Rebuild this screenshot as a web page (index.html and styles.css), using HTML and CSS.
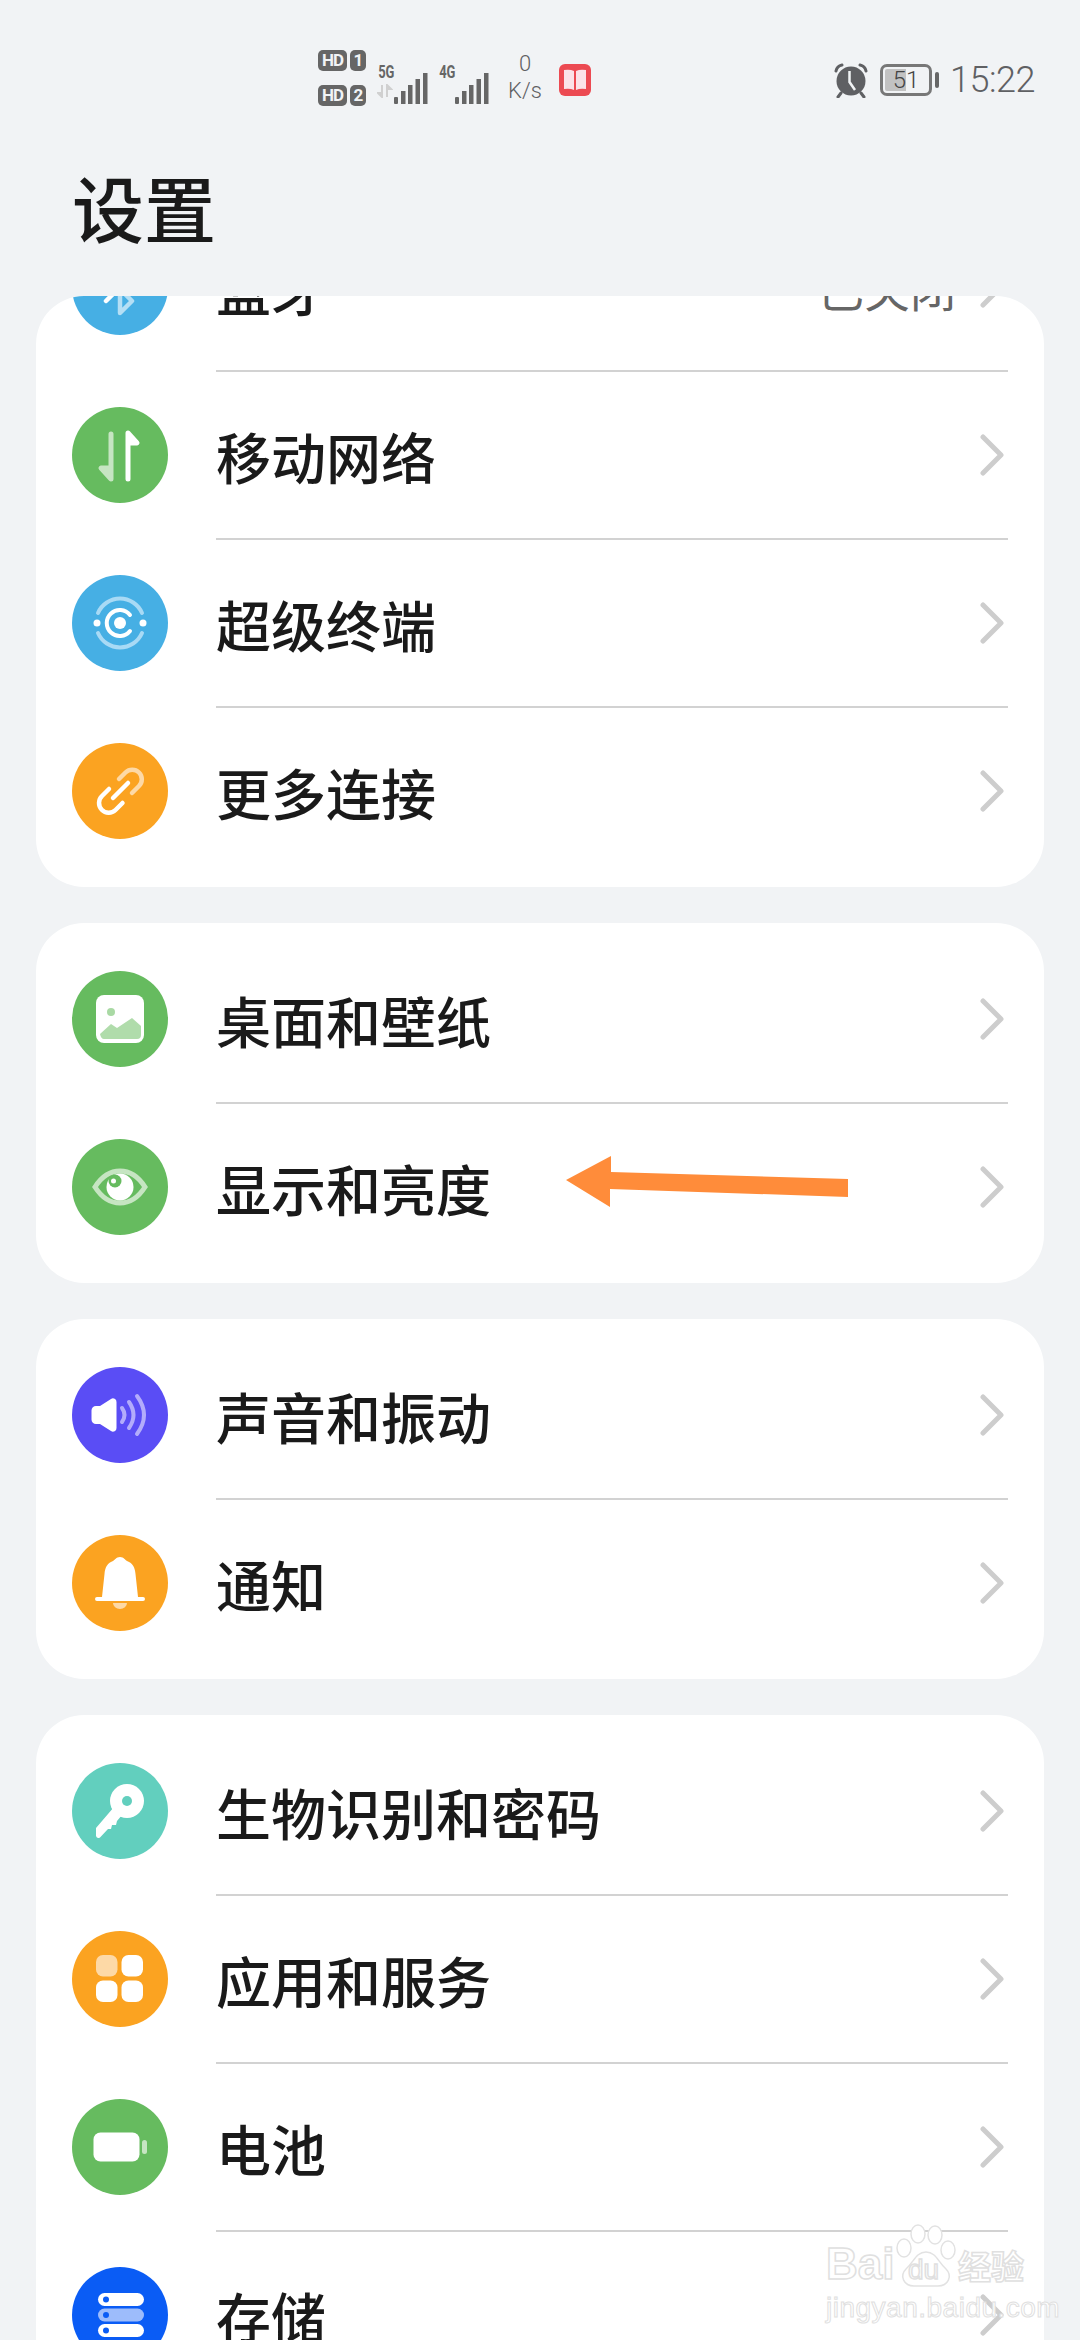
FILE: index.html
```html
<!DOCTYPE html>
<html lang="zh-CN">
<head>
    <meta charset="UTF-8">
    <meta name="viewport" content="width=device-width, initial-scale=1.0">
    <title>设置</title>
    <link rel="stylesheet" href="styles.css">
</head>
<body>
    <svg class="defs" width="0" height="0">
        <symbol id="chev" viewBox="0 0 24 42">
            <path d="M3 3 L21 21 L3 39" fill="none" stroke="#cdcdcd" stroke-width="5" stroke-linecap="round" stroke-linejoin="round"/>
        </symbol>
        <symbol id="bars" viewBox="0 0 34 32">
            <rect x="0" y="24" width="4" height="7" rx="1" fill="#666"/>
            <rect x="7" y="18" width="4.500" height="13" fill="#666"/>
            <rect x="14" y="12" width="4.500" height="19" fill="#666"/>
            <rect x="21.500" y="6" width="4.500" height="25" fill="#666"/>
            <rect x="29" y="0" width="4.500" height="31" fill="#666"/>
        </symbol>
    </svg>

    <header class="status-bar">
        <div class="sim-badges">
            <div class="sim-line"><span class="badge">HD</span><span class="badge badge-num">1</span></div>
            <div class="sim-line"><span class="badge">HD</span><span class="badge badge-num">2</span></div>
        </div>
        <div class="signal">
            <span class="net-label">5G</span>
            <svg class="data-arrows" width="16" height="14" viewBox="0 0 16 14">
                <path d="M5 1 V13 L1 9 H4 M10 13 V1 L14 5 H11" fill="#d0d0d0" stroke="#d0d0d0" stroke-width="2"/>
            </svg>
            <svg class="bars" width="34" height="32"><use href="#bars"/></svg>
        </div>
        <div class="signal">
            <span class="net-label">4G</span>
            <svg class="bars" width="34" height="32"><use href="#bars"/></svg>
        </div>
        <div class="net-speed"><span>0</span><span>K/s</span></div>
        <svg class="book-icon" width="32" height="32" viewBox="0 0 32 32">
            <rect width="32" height="32" rx="6" fill="#ec4a52"/>
            <path d="M5 6 Q11 5 15 7 V26 Q11 24 5 25 Z" fill="#fbe3e8"/>
            <path d="M27 6 Q21 5 17 7 V26 Q21 24 27 25 Z" fill="#fbe3e8"/>
        </svg>
        <div class="status-right">
            <svg width="36" height="36" viewBox="0 0 36 36">
                <path d="M3 9 Q4 4 9 3 M33 9 Q32 4 27 3 M8 31 L5 35 M28 31 L31 35" fill="none" stroke="#5f6063" stroke-width="3" stroke-linecap="round"/>
                <circle cx="18" cy="19" r="14.500" fill="#5f6063"/>
                <path d="M16.500 9 V20 L22 28" fill="none" stroke="#f1f3f5" stroke-width="2.500"/>
            </svg>
            <div class="battery">
                <div class="battery-body"><span>51</span></div>
                <div class="battery-nub"></div>
            </div>
            <span class="clock">15:22</span>
        </div>
    </header>

    <h1 class="page-title">设置</h1>

    <main class="scroller">
        <section class="card card-scrolled">
            <div class="row">
                <svg class="icon" viewBox="0 0 96 96">
                    <circle cx="48" cy="48" r="48" fill="#46afe4"/>
                    <path d="M48 48 V74 L60 62 L48 50" fill="none" stroke="#b4dff5" stroke-width="4.500" stroke-linejoin="round"/>
                    <path d="M34 62 L48 48" fill="none" stroke="#fff" stroke-width="4.500" stroke-linecap="round"/>
                </svg>
                <span class="label">蓝牙</span>
                <span class="value">已关闭</span>
                <svg class="chevron"><use href="#chev"/></svg>
            </div>
            <div class="row">
                <svg class="icon" viewBox="0 0 96 96">
                    <circle cx="48" cy="48" r="48" fill="#66bb5f"/>
                    <path d="M39 27 V72 L29 61 H37" fill="#c6e5c2" stroke="#c6e5c2" stroke-width="5" stroke-linecap="round" stroke-linejoin="round"/>
                    <path d="M56 72 V26 L65 36 H58" fill="#fff" stroke="#fff" stroke-width="5" stroke-linecap="round" stroke-linejoin="round"/>
                </svg>
                <span class="label">移动网络</span>
                <svg class="chevron"><use href="#chev"/></svg>
            </div>
            <div class="row">
                <svg class="icon" viewBox="0 0 96 96">
                    <circle cx="48" cy="48" r="48" fill="#46afe4"/>
                    <path d="M26 38 A24 24 0 0 1 70 38 M70 58 A24 24 0 0 1 26 58" fill="none" stroke="#a8daf5" stroke-width="4" stroke-linecap="round"/>
                    <path d="M58 40 A13 13 0 1 0 58 56" fill="none" stroke="#fff" stroke-width="4" stroke-linecap="round"/>
                    <circle cx="48" cy="48" r="6" fill="#fff"/>
                    <circle cx="25" cy="48" r="3.500" fill="#fff"/>
                    <circle cx="71" cy="48" r="3.500" fill="#fff"/>
                </svg>
                <span class="label">超级终端</span>
                <svg class="chevron"><use href="#chev"/></svg>
            </div>
            <div class="row">
                <svg class="icon" viewBox="0 0 96 96">
                    <circle cx="48" cy="48" r="48" fill="#fba321"/>
                    <path d="M37 46 L30 53 A9.500 9.500 0 0 0 43.500 67 L50.500 60" fill="none" stroke="#fff" stroke-width="4.500" stroke-linecap="round"/>
                    <path d="M60 50 L67 43 A9.500 9.500 0 0 0 53.500 29.500 L47 36" fill="none" stroke="#fdd9a6" stroke-width="4.500" stroke-linecap="round"/>
                    <path d="M41 55 L56 40" fill="none" stroke="#fff" stroke-width="4.500" stroke-linecap="round"/>
                </svg>
                <span class="label">更多连接</span>
                <svg class="chevron"><use href="#chev"/></svg>
            </div>
        </section>

        <section class="card">
            <div class="row">
                <svg class="icon" viewBox="0 0 96 96">
                    <circle cx="48" cy="48" r="48" fill="#66bb5f"/>
                    <rect x="24" y="24" width="48" height="48" rx="8" fill="#fff"/>
                    <circle cx="39" cy="41" r="4" fill="#a9d9a4"/>
                    <path d="M28 63 L39 53 L45 57 L60 47 L69 55 V64 Q69 68 65 68 H32 Q29 68 28 63 Z" fill="#b0dcab"/>
                </svg>
                <span class="label">桌面和壁纸</span>
                <svg class="chevron"><use href="#chev"/></svg>
            </div>
            <div class="row">
                <svg class="icon" viewBox="0 0 96 96">
                    <circle cx="48" cy="48" r="48" fill="#66bb5f"/>
                    <path d="M23 48 C30 37 39 32 48 32 C57 32 66 37 73 48 C66 59 57 64 48 64 C39 64 30 59 23 48 Z" fill="none" stroke="#c6e5c2" stroke-width="5"/>
                    <circle cx="48" cy="48" r="13.500" fill="#fff"/>
                    <circle cx="43" cy="42" r="6.500" fill="#66bb5f"/>
                    <circle cx="41.500" cy="42" r="2.500" fill="#fff"/>
                </svg>
                <span class="label">显示和亮度</span>
                <svg class="chevron"><use href="#chev"/></svg>
            </div>
        </section>

        <section class="card">
            <div class="row">
                <svg class="icon" viewBox="0 0 96 96">
                    <circle cx="48" cy="48" r="48" fill="#5a4df5"/>
                    <path d="M24 39 H28 L39 32 A3.500 3.500 0 0 1 44.500 35 V61 A3.500 3.500 0 0 1 39 64 L28 57 H24 A4.500 4.500 0 0 1 19.500 52.500 V43.500 A4.500 4.500 0 0 1 24 39 Z" fill="#fff"/>
                    <path d="M50 41 Q55 48 50 55 M57 35 Q66 48 57 61 M65 29 Q79 48 65 67" fill="none" stroke="#b3acfb" stroke-width="4" stroke-linecap="round"/>
                </svg>
                <span class="label">声音和振动</span>
                <svg class="chevron"><use href="#chev"/></svg>
            </div>
            <div class="row">
                <svg class="icon" viewBox="0 0 96 96">
                    <circle cx="48" cy="48" r="48" fill="#fba321"/>
                    <path d="M48 22 C44 22 43 25 41 26 C35 28 33 33 32.500 39 L30 62 H25 A2 2 0 0 0 25 66 H71 A2 2 0 0 0 71 62 H66 L63.500 39 C63 33 61 28 55 26 C53 25 52 22 48 22 Z" fill="#fff"/>
                    <path d="M41 68 H55 A7 6 0 0 1 41 68 Z" fill="#fdd9a6"/>
                </svg>
                <span class="label">通知</span>
                <svg class="chevron"><use href="#chev"/></svg>
            </div>
        </section>

        <section class="card">
            <div class="row">
                <svg class="icon" viewBox="0 0 96 96">
                    <circle cx="48" cy="48" r="48" fill="#62cfbe"/>
                    <circle cx="55" cy="38" r="17" fill="#fff"/>
                    <path d="M42 44 L24 65 V73 Q25 76 28 74.500 L36 66 L39 66 L40 62 L44 62 L45 58 L50 52 Z" fill="#fff"/>
                    <circle cx="55" cy="38" r="5" fill="#62cfbe"/>
                </svg>
                <span class="label">生物识别和密码</span>
                <svg class="chevron"><use href="#chev"/></svg>
            </div>
            <div class="row">
                <svg class="icon" viewBox="0 0 96 96">
                    <circle cx="48" cy="48" r="48" fill="#fba321"/>
                    <rect x="24" y="24" width="21.500" height="21.500" rx="7" fill="#fdd9a6"/>
                    <rect x="49.500" y="24" width="21.500" height="21.500" rx="7" fill="#fff"/>
                    <rect x="24" y="49.500" width="21.500" height="21.500" rx="7" fill="#fff"/>
                    <rect x="49.500" y="49.500" width="21.500" height="21.500" rx="7" fill="#fff"/>
                </svg>
                <span class="label">应用和服务</span>
                <svg class="chevron"><use href="#chev"/></svg>
            </div>
            <div class="row">
                <svg class="icon" viewBox="0 0 96 96">
                    <circle cx="48" cy="48" r="48" fill="#66bb5f"/>
                    <rect x="21.500" y="33.500" width="46" height="29" rx="7" fill="#fff"/>
                    <rect x="70" y="41" width="5" height="14" rx="2.500" fill="#c6e5c2"/>
                </svg>
                <span class="label">电池</span>
                <svg class="chevron"><use href="#chev"/></svg>
            </div>
            <div class="row">
                <svg class="icon" viewBox="0 0 96 96">
                    <circle cx="48" cy="48" r="48" fill="#0a5cf5"/>
                    <rect x="26" y="26" width="46" height="13" rx="6.500" fill="#fff"/>
                    <rect x="26" y="41.500" width="46" height="13" rx="6.500" fill="#9dbcfb"/>
                    <rect x="26" y="57" width="46" height="13" rx="6.500" fill="#fff"/>
                    <circle cx="34" cy="32.500" r="3" fill="#0a5cf5"/>
                    <circle cx="34" cy="48" r="3" fill="#0a5cf5"/>
                    <circle cx="34" cy="63.500" r="3" fill="#0a5cf5"/>
                </svg>
                <span class="label">存储</span>
                <svg class="chevron"><use href="#chev"/></svg>
            </div>
        </section>
    </main>

    <!-- hand drawn arrow sitting on top of the list -->
    <svg class="arrow" width="290" height="60" viewBox="0 0 290 60">
        <path d="M2 26 L47 2 L47 18 L284 25 L284 43 L46 35 L46 53 Z" fill="#ff8c3a"/>
    </svg>

    <div class="watermark">
        <div class="wm-top">
            <span class="wm-bai">Bai</span>
            <div class="wm-paw">
                <svg width="60" height="64" viewBox="0 0 60 64">
                    <g fill="#fff" stroke="#e2e2e2" stroke-width="1.500">
                        <ellipse cx="8" cy="24" rx="7" ry="9"/>
                        <ellipse cx="22" cy="10" rx="7" ry="9"/>
                        <ellipse cx="39" cy="11" rx="7" ry="9"/>
                        <ellipse cx="52" cy="26" rx="7" ry="9"/>
                        <path d="M30 28 C20 28 18 38 10 45 C3 52 8 62 18 62 H42 C52 62 57 52 50 45 C42 38 40 28 30 28 Z"/>
                    </g>
                </svg>
                <span class="wm-du">du</span>
            </div>
            <span class="wm-cn">经验</span>
        </div>
        <div class="wm-url">jingyan.baidu.com</div>
    </div>
</body>
</html>
```

FILE: styles.css
```css
* {
    box-sizing: border-box;
}
html, body {
    height: 100%;
}
body {
    margin: 0;
    position: relative;
    overflow: hidden;
    background-color: #f1f3f5;
    color: #1a1a1a;
    font-family: "Noto Sans CJK SC", "Noto Sans", sans-serif;
}
.defs {
    position: absolute;
}

/* status bar */
.status-bar {
    height: 104px;
    padding: 50px 45px 0 318px;
    display: flex;
    align-items: flex-start;
    color: #5f6063;
    font-family: Roboto, sans-serif;
}
.sim-badges {
    width: 59px;
    display: flex;
    flex-direction: column;
    gap: 14px;
}
.sim-line {
    display: flex;
    gap: 3px;
}
.badge {
    height: 21px;
    width: 29px;
    border-radius: 5px;
    background-color: #666;
    color: #f1f3f5;
    font-size: 17px;
    font-weight: 700;
    line-height: 21px;
    text-align: center;
    letter-spacing: -1px;
}
.badge-num {
    width: 16px;
}
.signal {
    width: 61px;
    height: 46px;
    margin-top: 12px;
    display: flex;
    align-items: flex-end;
    position: relative;
}
.bars {
    margin-left: auto;
    margin-right: 10px;
    margin-bottom: 3px;
}
.data-arrows {
    position: absolute;
    left: 0;
    top: 22px;
}
.net-label {
    position: absolute;
    left: -2px;
    top: -1px;
    font-size: 18px;
    font-weight: 700;
    color: #666;
    transform: scaleX(0.72);
}
.net-speed {
    width: 52px;
    display: flex;
    flex-direction: column;
    align-items: center;
    font-size: 22px;
    font-weight: 300;
    line-height: 27px;
}
.book-icon {
    margin: 14px 0 0 8px;
}
.status-right {
    margin-left: auto;
    margin-top: 10px;
    display: flex;
    align-items: center;
    gap: 11px;
}
.battery {
    display: flex;
    align-items: center;
    gap: 3px;
}
.battery-body {
    width: 52px;
    height: 32px;
    border: 3px solid #777;
    border-radius: 7px;
    background: linear-gradient(90deg, #c2c2c2 51%, transparent 51%);
    background-clip: content-box;
    padding: 2px;
    font-size: 24px;
    font-weight: 300;
    line-height: 23px;
    text-align: center;
    color: #444;
}
.battery-nub {
    width: 4px;
    height: 16px;
    border-radius: 2px;
    background-color: #666;
}
.clock {
    font-size: 36px;
    font-weight: 300;
    letter-spacing: -0.5px;
    line-height: 40px;
}

.page-title {
    margin: 0;
    height: 192px;
    padding-left: 72px;
    padding-top: 60px;
    font-size: 72px;
    font-weight: 500;
    line-height: 84px;
}

/* list, scrolled so its first row is partly hidden */
.scroller {
    height: 2044px;
    margin: 0 36px;
    border-radius: 48px 48px 0 0;
    overflow: hidden;
}
.card {
    background-color: #fff;
    border-radius: 48px;
    padding: 12px 36px;
    margin-bottom: 36px;
}
.card-scrolled {
    margin-top: -105px;
}
.row {
    height: 168px;
    display: flex;
    align-items: center;
    position: relative;
}
.row + .row::before {
    content: "";
    position: absolute;
    left: 144px;
    right: 0;
    top: -1px;
    height: 2px;
    background-color: #d2d2d2;
}
.icon {
    width: 96px;
    height: 96px;
    flex: none;
    margin-right: 48px;
}
.label {
    flex: 1;
    font-size: 55px;
    font-weight: 500;
    line-height: 72px;
}
.value {
    font-size: 46px;
    color: #666;
    margin-right: 24px;
}
.chevron {
    width: 24px;
    height: 42px;
    margin-right: 4px;
    flex: none;
}

/* arrow and site mark on top of everything */
.arrow {
    position: absolute;
    left: 564px;
    top: 1154px;
}
.watermark {
    position: absolute;
    left: 826px;
    top: 2224px;
    width: 200px;
    color: #fff;
    -webkit-text-stroke: 1.5px #e0e0e0;
    font-family: "Liberation Sans", sans-serif;
}
.wm-top {
    display: flex;
    align-items: flex-end;
    height: 64px;
}
.wm-bai {
    width: 70px;
    font-size: 44px;
    font-weight: 700;
    line-height: 44px;
    height: 46px;
}
.wm-paw {
    width: 60px;
    height: 64px;
    position: relative;
}
.wm-du {
    position: absolute;
    left: 12px;
    bottom: 4px;
    font-size: 28px;
    line-height: 28px;
}
.wm-cn {
    margin-left: 2px;
    font-family: "Noto Sans CJK SC", sans-serif;
    font-size: 33px;
    font-weight: 700;
    line-height: 46px;
    height: 46px;
    white-space: nowrap;
}
.wm-url {
    margin-top: 4px;
    font-size: 28px;
    line-height: 32px;
    white-space: nowrap;
    letter-spacing: 0.5px;
    -webkit-text-stroke-width: 1px;
}
```
